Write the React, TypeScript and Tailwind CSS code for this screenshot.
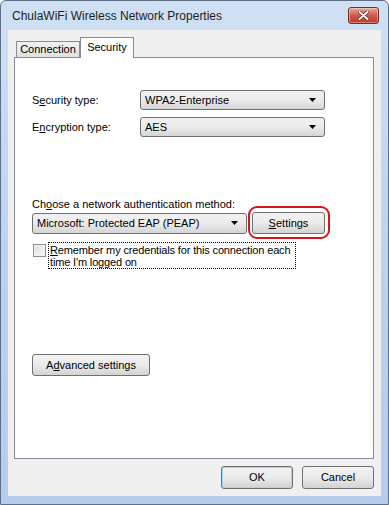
import React from "react";

const font = "font-['Liberation_Sans',Arial,sans-serif]";

const Combo = ({ text, className }: { text: string; className: string }) => (
  <div
    className={`flex items-center justify-between rounded-[3px] border border-[#707070] bg-gradient-to-b from-[#f2f2f2] via-[#ebebeb] to-[#d5d5d5] pl-[4px] pr-[8px] ${className}`}
  >
    <span className="text-[11px] leading-none text-[#000]">{text}</span>
    <svg width="7" height="4" viewBox="0 0 7 4">
      <path d="M0 0 H7 L3.5 4 Z" fill="#000" />
    </svg>
  </div>
);

const Button = ({
  children,
  className,
}: {
  children: React.ReactNode;
  className: string;
}) => (
  <div
    className={`flex items-center justify-center rounded-[3px] border border-[#707070] bg-gradient-to-b from-[#f2f2f2] via-[#ebebeb] to-[#d3d3d3] text-[11px] leading-none text-black ${className}`}
  >
    {children}
  </div>
);

const App = () => {
  return (
    <div
      className={`flex h-[505px] w-[389px] flex-col rounded-t-[6px] border border-[#5c6f86] bg-gradient-to-b from-[#cfe0f4] via-[#bcd3ee] to-[#b3cdeb] ${font}`}
    >
      {/* title bar */}
      <div className="flex h-[29px] items-center justify-between pl-[11px] pr-[9px]">
        <span className="text-[12px] text-[#1e1e1e]">
          ChulaWiFi Wireless Network Properties
        </span>
        <div className="flex h-[17px] w-[31px] items-center justify-center rounded-[3px] border border-[#7a2c24] bg-gradient-to-b from-[#e9a99b] via-[#d0584a] to-[#c0392b] shadow-[inset_0_0_0_1px_rgba(255,255,255,0.35)]">
          <svg width="11" height="9" viewBox="0 0 11 9">
            <path
              d="M1.5 1 L9.5 8 M9.5 1 L1.5 8"
              stroke="#5a1a12"
              strokeWidth="3.4"
              strokeLinecap="round"
            />
            <path
              d="M1.5 1 L9.5 8 M9.5 1 L1.5 8"
              stroke="#fff"
              strokeWidth="2"
              strokeLinecap="round"
            />
          </svg>
        </div>
      </div>

      {/* client area */}
      <div className="mx-[7px] flex h-[466px] flex-col bg-[#f0f0f0] pl-[6px] pr-[7px] pt-[7px]">
        {/* tabs */}
        <div className="flex h-[20px] items-end pl-[2px]">
          <div className="flex h-[16px] w-[64px] items-center justify-center border border-b-0 border-[#898c95] bg-gradient-to-b from-[#f2f2f2] to-[#e0e0e0] text-[11px] leading-none">
            Connection
          </div>
          <div className="relative z-10 -mb-[1px] flex h-[21px] w-[54px] items-start justify-center border border-b-0 border-[#898c95] bg-white pt-[4px] text-[11px] leading-none">
            Security
          </div>
        </div>

        {/* panel */}
        <div className="flex h-[402px] shrink-0 flex-col border border-[#898c95] bg-white pl-[17px] text-[11px] leading-none text-black">
          <div className="mt-[32px] flex h-[20px] items-center">
            <span className="w-[108px]">
              S<span className="underline">e</span>curity type:
            </span>
            <Combo text="WPA2-Enterprise" className="h-[20px] w-[185px]" />
          </div>
          <div className="mt-[7px] flex h-[20px] items-center">
            <span className="w-[108px]">
              E<span className="underline">n</span>cryption type:
            </span>
            <Combo text="AES" className="h-[20px] w-[185px]" />
          </div>

          <div className="mt-[60px] h-[14px] leading-[14px]">
            Ch<span className="underline">o</span>ose a network authentication method:
          </div>
          <div className="mt-[1px] flex h-[22px] items-center">
            <Combo
              text="Microsoft: Protected EAP (PEAP)"
              className="h-[21px] w-[215px]"
            />
            <div className="relative ml-[5px]">
              <Button className="h-[22px] w-[73px]">
                <span className="underline">S</span>ettings
              </Button>
              <div className="absolute -bottom-[5px] -left-[4px] -right-[5px] -top-[6px] rounded-[9px] border-[2px] border-[#d5141c]" />
            </div>
          </div>
          <div className="mt-[8px] flex items-start">
            <div className="ml-[1px] mt-[2px] h-[13px] w-[13px] shrink-0 border border-[#8e8f8f] bg-gradient-to-br from-[#dcdcdc] to-[#fbfbfb] shadow-[inset_0_0_0_1px_#f4f4f4]" />
            <div className="ml-[2px] w-[248px] border border-dotted border-[#000] pl-[1px] pt-[1px] leading-[12px] tracking-[-0.15px]">
              <span className="underline">R</span>emember my credentials for this connection each
              <br />
              time I'm logged on
            </div>
          </div>

          <Button className="mt-[85px] h-[22px] w-[118px]">
            A<span className="underline">d</span>vanced settings
          </Button>
        </div>

        {/* buttons */}
        <div className="mt-[7px] flex justify-end gap-[9px]">
          <Button className="h-[23px] w-[72px] border-[#3c7fb1] shadow-[inset_0_0_0_1px_#9ed9f3]">
            OK
          </Button>
          <Button className="h-[23px] w-[72px]">Cancel</Button>
        </div>
      </div>
    </div>
  );
};

export default App;
